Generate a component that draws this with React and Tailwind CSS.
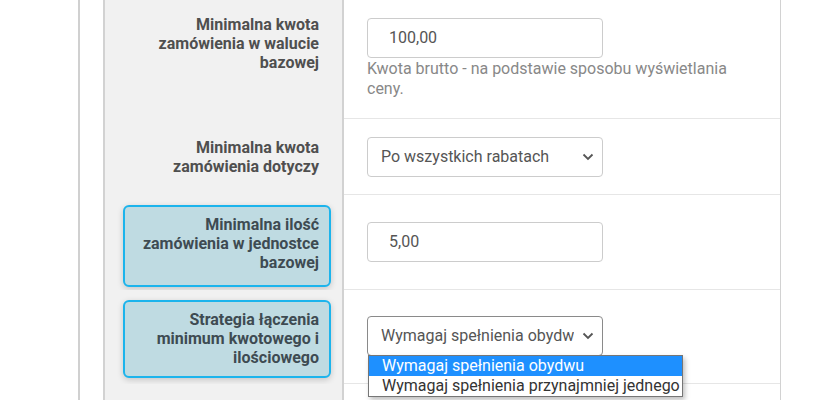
import React from "react";

const Chevron = () => (
  <svg width="12" height="8" viewBox="0 0 12 8" className="shrink-0">
    <polyline points="1.5,1.5 6,6 10.5,1.5" fill="none" stroke="#555" strokeWidth="1.8" />
  </svg>
);

const Label = ({ children }) => (
  <div className="text-right text-[16px] leading-[19px] font-bold text-[#4f4f4f] pr-[23px]">{children}</div>
);

const Highlight = ({ children, h }) => (
  <div
    className={`ml-[18px] mr-[11px] mt-[10px] rounded-[6px] border-2 border-[#1cb4ec] bg-[#bfdbe2] pt-[8px] pr-[10px] text-right text-[16px] leading-[19px] font-bold text-[#3e4b52] shadow-[0_2px_6px_rgba(0,0,0,0.18)] ${h}`}
  >
    {children}
  </div>
);

const TextInput = ({ value }) => (
  <div className="w-[236px] h-[40px] rounded-[4px] border border-[#ccc] bg-white flex items-center pl-[21px] text-[16px] text-[#555]">
    {value}
  </div>
);

const Select = ({ value, dark }) => (
  <div
    className={`w-[236px] h-[40px] rounded-[4px] border bg-white flex items-center pl-[13px] pr-[8px] text-[16px] text-[#555] ${dark ? "border-[#8a8a8a]" : "border-[#ccc]"}`}
  >
    <span className="flex-1 overflow-hidden whitespace-nowrap">{value}</span>
    <span className="w-[20px] flex justify-end">
      <Chevron />
    </span>
  </div>
);

export default function App() {
  return (
    <div className="h-[400px] overflow-hidden bg-white flex font-['Roboto',sans-serif]">
      <div className="w-[78px] shrink-0" />
      <div className="w-[2px] shrink-0 bg-[#d0d0d0]" />
      <div className="w-[23px] shrink-0" />
      <div className="flex flex-col border-l-2 border-r border-[#d2d2d2]">
        {/* row 1 */}
        <div className="flex h-[119px]">
          <div className="w-[239px] bg-[#f1f1f1] border-r-2 border-[#d2d2d2] pt-[15px]">
            <Label>
              Minimalna kwota
              <br />
              zamówienia w walucie
              <br />
              bazowej
            </Label>
          </div>
          <div className="w-[436px] border-b border-[#e6e6e6] pl-[23px] pt-[18px]">
            <TextInput value="100,00" />
            <p className="w-[390px] mt-[1px] text-[16px] leading-[20px] text-[#888]">
              Kwota brutto - na podstawie sposobu wyświetlania ceny.
            </p>
          </div>
        </div>
        {/* row 2 */}
        <div className="flex h-[76px]">
          <div className="w-[239px] bg-[#f1f1f1] border-r-2 border-[#d2d2d2] pt-[19px]">
            <Label>
              Minimalna kwota
              <br />
              zamówienia dotyczy
            </Label>
          </div>
          <div className="w-[436px] border-b border-[#e6e6e6] pl-[23px] pt-[18px]">
            <Select value="Po wszystkich rabatach" />
          </div>
        </div>
        {/* row 3 */}
        <div className="flex h-[95px]">
          <div className="w-[239px] bg-[#f1f1f1] border-r-2 border-[#d2d2d2]">
            <Highlight h="h-[82px]">
              Minimalna ilość
              <br />
              zamówienia w jednostce
              <br />
              bazowej
            </Highlight>
          </div>
          <div className="w-[436px] border-b border-[#e6e6e6] pl-[23px] pt-[27px]">
            <TextInput value="5,00" />
          </div>
        </div>
        {/* row 4 */}
        <div className="flex h-[94px]">
          <div className="w-[239px] bg-[#f1f1f1] border-r-2 border-[#d2d2d2]">
            <Highlight h="h-[78px]">
              Strategia łączenia
              <br />
              minimum kwotowego i
              <br />
              ilościowego
            </Highlight>
          </div>
          <div className="relative w-[436px] border-b border-[#e6e6e6] pl-[23px] pt-[26px]">
            <Select value="Wymagaj spełnienia obydwu" dark />
            <div className="absolute left-[24px] top-[65px] z-10 w-[315px] border border-[#767676] bg-white text-[16px] leading-[20px] shadow-[2px_3px_5px_rgba(0,0,0,0.25)]">
              <div className="bg-[#1e90ff] text-white pl-[13px]">Wymagaj spełnienia obydwu</div>
              <div className="text-[#333] pl-[13px] whitespace-nowrap">Wymagaj spełnienia przynajmniej jednego</div>
            </div>
          </div>
        </div>
        {/* row 5 */}
        <div className="flex flex-1">
          <div className="w-[239px] bg-[#f1f1f1] border-r-2 border-[#d2d2d2]" />
          <div className="w-[436px]" />
        </div>
      </div>
    </div>
  );
}
